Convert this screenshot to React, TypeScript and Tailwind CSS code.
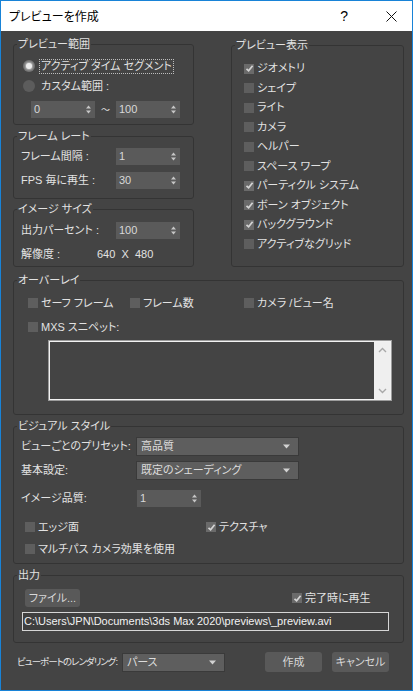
import React from 'react';

const Group: React.FC<{ title: string; className?: string; children: React.ReactNode }> = ({ title, className = '', children }) => (
  <fieldset className={`border border-[#343434] rounded-[3px] min-w-0 ${className}`}>
    <legend className="ml-[3px] px-[1px] leading-[14px] text-[11px] text-[#e2e2e2]">{title}</legend>
    {children}
  </fieldset>
);

const Check: React.FC<{ checked?: boolean }> = ({ checked }) => (
  <span className={`w-[10px] h-[10px] shrink-0 flex items-center justify-center ${checked ? 'bg-[#6a6a6a]' : 'bg-[#5e5e5e]'}`}>
    {checked && (
      <svg width="9" height="9" viewBox="0 0 9 9">
        <path d="M1.5 4.8 L3.6 6.8 L7.6 1.8" fill="none" stroke="#d4d4d4" strokeWidth="1.7" />
      </svg>
    )}
  </span>
);

const CheckRow: React.FC<{ label: string; checked?: boolean; className?: string }> = ({ label, checked, className = '' }) => (
  <div className={`flex items-center gap-[3px] ${className}`}>
    <Check checked={checked} />
    <span className="leading-none whitespace-nowrap">{label}</span>
  </div>
);

const Spinner: React.FC<{ value: string; className?: string }> = ({ value, className = '' }) => (
  <div className={`h-[17px] w-[64px] bg-[#5a5a5a] flex items-center justify-between pl-[3px] pr-[4px] text-[#d8d8d8] ${className}`}>
    <span className="leading-none">{value}</span>
    <svg width="5" height="9" viewBox="0 0 5 9">
      <path d="M2.5 0.5 L5 3.5 L0 3.5 Z" fill="#c6c6c6" />
      <path d="M0 5.5 L5 5.5 L2.5 8.5 Z" fill="#c6c6c6" />
    </svg>
  </div>
);

const Dropdown: React.FC<{ value: string; className?: string }> = ({ value, className = '' }) => (
  <div className={`h-[19px] bg-[#5e5e5e] border border-[#3a3a3a] flex items-center justify-between pl-[4px] pr-[8px] text-[#dcdcdc] ${className}`}>
    <span className="leading-none whitespace-nowrap">{value}</span>
    <svg width="7" height="5" viewBox="0 0 7 5">
      <path d="M0 0.5 L7 0.5 L3.5 4.5 Z" fill="#d2d2d2" />
    </svg>
  </div>
);

const Radio: React.FC<{ on?: boolean }> = ({ on }) => (
  <span className={`w-[12px] h-[12px] rounded-full shrink-0 flex items-center justify-center ${on ? 'bg-[#707070]' : 'bg-[#5c5c5c]'}`}>
    {on && <span className="w-[6px] h-[6px] rounded-full bg-[#ececec] shadow-[0_0_2px_1px_rgba(255,255,255,0.5)]" />}
  </span>
);

const Button: React.FC<{ label: string; className?: string }> = ({ label, className = '' }) => (
  <div className={`bg-[#595959] rounded-[3px] flex items-center justify-center text-[#d8d8d8] leading-none ${className}`}>{label}</div>
);

export default function App() {
  const display = [
    { label: 'ジオメトリ', checked: true },
    { label: 'シェイプ' },
    { label: 'ライト' },
    { label: 'カメラ' },
    { label: 'ヘルパー' },
    { label: 'スペース ワープ' },
    { label: 'パーティクル システム', checked: true },
    { label: 'ボーン オブジェクト', checked: true },
    { label: 'バックグラウンド', checked: true },
    { label: 'アクティブなグリッド' },
  ];

  return (
    <div className="w-[413px] h-[691px] border border-[#1883d7] flex flex-col font-['Liberation_Sans','Noto_Sans_CJK_JP',sans-serif] [font-feature-settings:'palt'] text-[11px] text-[#e2e2e2]">
      {/* title bar */}
      <div className="h-[30px] bg-white flex items-center pl-[8px] text-black">
        <span className="text-[12px] font-['Noto_Sans_CJK_JP',sans-serif]">プレビューを作成</span>
        <span className="ml-auto mr-[38px] text-[14px] leading-none">?</span>
        <svg width="11" height="11" viewBox="0 0 11 11" className="mr-[15px]">
          <path d="M0.5 0.5 L10.5 10.5 M10.5 0.5 L0.5 10.5" stroke="#111" strokeWidth="1" />
        </svg>
      </div>

      <div className="flex-1 bg-[#444444] pl-[12px] pr-[8px] flex flex-col">
        <div className="flex justify-between items-start">
          {/* left column */}
          <div className="w-[181px] flex flex-col">
            <Group title="プレビュー範囲" className="mt-[6px]">
              <div className="pt-[5px] pb-[6px]">
                <div className="h-[20px] flex items-center pl-[9px]">
                  <Radio on />
                  <span className="ml-[4px] border border-dotted border-[#bdbdbd] px-[1px] h-[15px] flex items-center leading-none whitespace-nowrap">アクティブ タイム セグメント</span>
                </div>
                <div className="h-[20px] flex items-center pl-[9px]">
                  <Radio />
                  <span className="ml-[6px] leading-none">カスタム範囲 :</span>
                </div>
                <div className="mt-[5px] flex items-center pl-[17px]">
                  <Spinner value="0" />
                  <span className="w-[21px] text-center leading-none text-[9px] font-['Noto_Sans_CJK_JP',sans-serif]">～</span>
                  <Spinner value="100" />
                </div>
              </div>
            </Group>

            <Group title="フレーム レート" className="mt-[4px]">
              <div className="pt-[5px] pb-[9px] pl-[7px] flex flex-col gap-[7px]">
                <div className="flex items-center">
                  <span className="w-[95px] leading-none">フレーム間隔 :</span>
                  <Spinner value="1" />
                </div>
                <div className="flex items-center">
                  <span className="w-[95px] leading-none">FPS 毎に再生 :</span>
                  <Spinner value="30" />
                </div>
              </div>
            </Group>

            <Group title="イメージ サイズ" className="mt-[3px]">
              <div className="pt-[6px] pb-[4px] pl-[7px]">
                <div className="flex items-center">
                  <span className="w-[95px] leading-none">出力パーセント :</span>
                  <Spinner value="100" />
                </div>
                <div className="mt-[7px] h-[16px] flex items-center">
                  <span className="w-[76px] leading-none">解像度 :</span>
                  <span className="leading-none whitespace-pre">640  X  480</span>
                </div>
              </div>
            </Group>
          </div>

          {/* right column */}
          <Group title="プレビュー表示" className="w-[173px] mt-[7px]">
            <div className="pt-[7px] pb-[12px] pl-[12px]">
              {display.map((d) => (
                <CheckRow key={d.label} label={d.label} checked={d.checked} className="h-[19.5px]" />
              ))}
            </div>
          </Group>
        </div>

        <Group title="オーバーレイ" className="mt-[6px]">
          <div className="pt-[7px] pb-[13px] pl-[14px]">
            <div className="h-[18px] flex items-center">
              <CheckRow label="セーフ フレーム" className="w-[102px]" />
              <CheckRow label="フレーム数" className="w-[114px]" />
              <CheckRow label="カメラ /ビュー名" />
            </div>
            <div className="mt-[6px] h-[18px] flex items-center">
              <CheckRow label="MXS スニペット:" />
            </div>
            <div className="mt-[4px] ml-[20px] w-[344px] h-[61px] border border-[#9c9c9c] flex">
              <div className="flex-1 border border-[#f2f2f2] border-r-0 bg-[#444444]" />
              <div className="w-[17px] bg-[#efefef] border-y border-r border-[#f2f2f2] flex flex-col items-center justify-between py-[5px]">
                <svg width="9" height="6" viewBox="0 0 9 6">
                  <path d="M1 5 L4.5 1.5 L8 5" fill="none" stroke="#a8a8a8" strokeWidth="1.4" />
                </svg>
                <svg width="9" height="6" viewBox="0 0 9 6">
                  <path d="M1 1 L4.5 4.5 L8 1" fill="none" stroke="#a8a8a8" strokeWidth="1.4" />
                </svg>
              </div>
            </div>
          </div>
        </Group>

        <Group title="ビジュアル スタイル" className="mt-[4px]">
          <div className="pt-[4px] pb-[5px]">
            <div className="flex items-center pl-[7px]">
              <span className="w-[115px] leading-none">ビューごとのプリセット:</span>
              <Dropdown value="高品質" className="w-[163px]" />
            </div>
            <div className="mt-[5px] flex items-center pl-[7px]">
              <span className="w-[115px] leading-none">基本設定:</span>
              <Dropdown value="既定のシェーディング" className="w-[163px]" />
            </div>
            <div className="mt-[10px] flex items-center pl-[7px]">
              <span className="w-[116px] leading-none">イメージ品質:</span>
              <Spinner value="1" className="h-[16px]" />
            </div>
            <div className="mt-[11px] h-[18px] flex items-center pl-[11px]">
              <CheckRow label="エッジ面" className="w-[181px]" />
              <CheckRow label="テクスチャ" checked />
            </div>
            <div className="mt-[4px] h-[18px] flex items-center pl-[11px]">
              <CheckRow label="マルチパス カメラ効果を使用" />
            </div>
          </div>
        </Group>

        <Group title="出力" className="mt-[4px]">
          <div className="pt-[7px] pb-[11px]">
            <div className="flex items-center pl-[11px]">
              <Button label="ファイル..." className="w-[55px] h-[18px]" />
              <CheckRow label="完了時に再生" checked className="ml-[212px]" />
            </div>
            <div className="mt-[5px] ml-[8px] w-[367px] h-[19px] border border-[#d6d6d6] bg-[#3f3f3f] flex items-center pl-[1px] text-[#f2f2f2]">
              <span className="leading-none whitespace-nowrap">C:\Users\JPN\Documents\3ds Max 2020\previews\_preview.avi</span>
            </div>
          </div>
        </Group>

        <div className="mt-[8px] h-[22px] flex items-center pl-[4px]">
          <span className="w-[105px] shrink-0 leading-none whitespace-nowrap text-[9.5px] tracking-[-1px]">ビューポートのレンダリング:</span>
          <Dropdown value="パース" className="w-[103px]" />
          <Button label="作成" className="ml-[40px] w-[57px] h-[20px]" />
          <Button label="キャンセル" className="ml-[10px] w-[57px] h-[20px]" />
        </div>
      </div>
    </div>
  );
}
